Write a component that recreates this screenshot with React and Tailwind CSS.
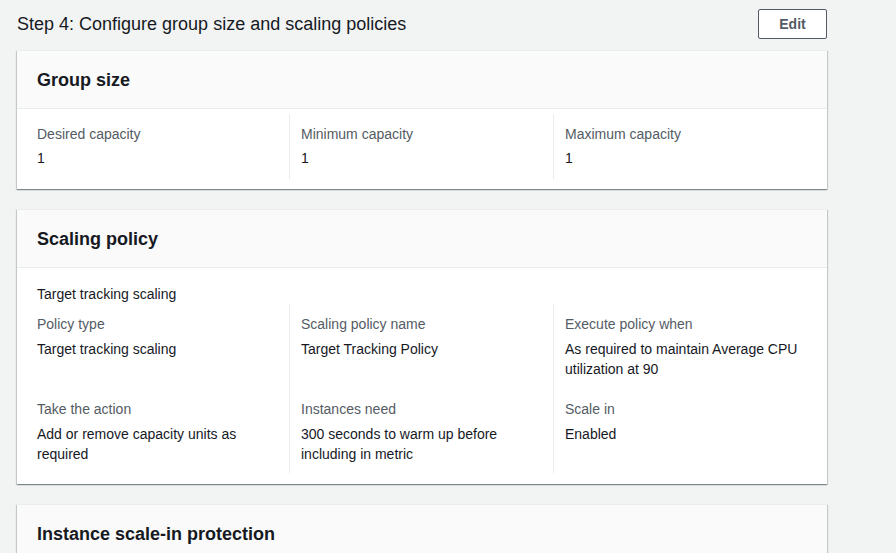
import React from 'react';

const Field = ({ label, value, gap }) => (
  <>
    <div className="text-[14px] leading-5 text-[#545b64]">{label}</div>
    <div className={`${gap} text-[14px] leading-5 text-[#16191f]`}>{value}</div>
  </>
);

const Card = ({ title, children, className = '' }) => (
  <div className={`bg-white border-t border-[#eaeded] shadow-[0_1px_1px_0_rgba(0,28,36,0.3),1px_1px_1px_0_rgba(0,28,36,0.15),-1px_1px_1px_0_rgba(0,28,36,0.15)] ${className}`}>
    <div className="bg-[#fafafa] border-b border-[#eaeded] px-5 h-[58px] flex items-center">
      <h2 className="text-[18px] font-bold text-[#16191f] leading-[22px]">{title}</h2>
    </div>
    {children}
  </div>
);

// rows of three fields; dividers run unbroken through all rows
const Columns = ({ rows, firstPad, rowPad, lastPad, gap }) => (
  <div className="grid grid-cols-[252px_264px_1fr]">
    {rows.map((row, r) =>
      row.map((f, i) => (
        <div
          key={`${r}-${i}`}
          className={[
            r === 0 ? firstPad : rowPad,
            r === rows.length - 1 ? lastPad : '',
            i > 0 ? 'border-l border-[#eaeded] pl-[11px]' : 'pr-4',
          ].join(' ')}
        >
          <Field label={f.label} value={f.value} gap={gap} />
        </div>
      ))
    )}
  </div>
);

const App = () => {
  return (
    <div className="min-h-screen bg-[#f2f3f3] font-['Liberation_Sans',Arial,sans-serif] overflow-hidden">
      <div className="w-[810px] ml-[17px] pt-[9px]">
        <div className="flex items-center justify-between h-[30px]">
          <h1 className="text-[18px] leading-6 text-[#16191f]">Step 4: Configure group size and scaling policies</h1>
          <button className="h-[30px] w-[69px] border border-[#545b64] rounded-[2px] bg-white text-[14px] font-bold text-[#545b64]">
            Edit
          </button>
        </div>

        <Card title="Group size" className="mt-[11px]">
          <div className="px-5 pt-[5px] pb-[10px]">
            <Columns
              firstPad="pt-[10px]"
              rowPad=""
              lastPad="pb-[11px]"
              gap="mt-1"
              rows={[
                [
                  { label: 'Desired capacity', value: '1' },
                  { label: 'Minimum capacity', value: '1' },
                  { label: 'Maximum capacity', value: '1' },
                ],
              ]}
            />
          </div>
        </Card>

        <Card title="Scaling policy" className="mt-5">
          <div className="px-5 pt-4 pb-[11px]">
            <div className="text-[14px] leading-5 text-[#16191f]">Target tracking scaling</div>
            <Columns
              firstPad="pt-[10px]"
              rowPad="pt-5"
              lastPad="pb-[9px]"
              gap="mt-[5px]"
              rows={[
                [
                  { label: 'Policy type', value: 'Target tracking scaling' },
                  { label: 'Scaling policy name', value: 'Target Tracking Policy' },
                  { label: 'Execute policy when', value: 'As required to maintain Average CPU utilization at 90' },
                ],
                [
                  { label: 'Take the action', value: 'Add or remove capacity units as required' },
                  { label: 'Instances need', value: '300 seconds to warm up before including in metric' },
                  { label: 'Scale in', value: 'Enabled' },
                ],
              ]}
            />
          </div>
        </Card>

        <Card title="Instance scale-in protection" className="mt-5">
          <div className="h-[60px]" />
        </Card>
      </div>
    </div>
  );
};

export default App;
